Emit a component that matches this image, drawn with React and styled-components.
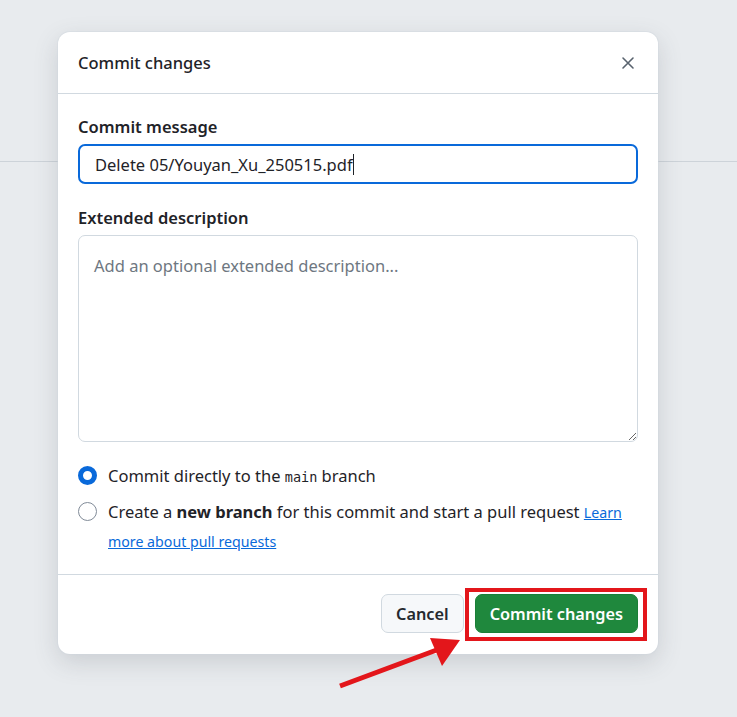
import styled, { createGlobalStyle } from "styled-components";

const Global = createGlobalStyle`
  html, body { margin: 0; padding: 0; }
  body {
    font-family: "Noto Sans", "Liberation Sans", sans-serif;
    color: #1f2328;
    background: #e9ecef;
  }
`;

const Page = styled.div`
  position: relative;
  width: 737px;
  height: 717px;
  overflow: hidden;
  background: #e8ebee;
`;

const Backdrop = styled.div`
  height: 161px;
  border-bottom: 1px solid #cdd3d9;
`;

const Dialog = styled.div`
  position: absolute;
  top: 32px;
  left: 58px;
  width: 600px;
  background: #fff;
  border-radius: 12px;
  box-shadow: 0 0 0 1px rgba(208, 215, 222, 0.4), 0 8px 24px rgba(66, 74, 83, 0.18);
  display: flex;
  flex-direction: column;
`;

const Header = styled.div`
  height: 61px;
  display: flex;
  align-items: center;
  justify-content: space-between;
  padding: 0 20px;
  border-bottom: 1px solid #d1d9e0;
`;

const Title = styled.h1`
  margin: 0;
  font-size: 16.5px;
  font-weight: 500;
  color: #1f2328;
`;

const Close = styled.button`
  border: 0;
  background: none;
  padding: 0;
  width: 20px;
  height: 20px;
  display: flex;
  align-items: center;
  justify-content: center;
  color: #59636e;
`;

const Body = styled.div`
  padding: 21px 20px 18px;
  display: flex;
  flex-direction: column;
`;

const Label = styled.div`
  font-size: 16.5px;
  font-weight: 600;
  margin-bottom: 6px;
`;

const InputBox = styled.div`
  height: 40px;
  box-sizing: border-box;
  border: 2px solid #0969da;
  border-radius: 7px;
  padding: 0 15px;
  display: flex;
  align-items: center;
  font-size: 16.5px;
  color: #1f2328;
  margin-bottom: 22px;
`;

const Caret = styled.span`
  display: inline-block;
  width: 1px;
  height: 21px;
  background: #1f2328;
`;

const TextArea = styled.textarea`
  display: block;
  box-sizing: border-box;
  width: 100%;
  height: 207px;
  border: 1px solid #d1d9e0;
  border-radius: 7px;
  padding: 18px 15px;
  font-family: inherit;
  font-size: 16.5px;
  resize: vertical;
  outline: none;
  margin: 0 0 20px;
  &::placeholder { color: #6e7781; }
`;

const Option = styled.label`
  display: flex;
  align-items: flex-start;
  gap: 11px;
  font-size: 16.5px;
  line-height: 28px;
  color: #1f2328;
  margin-bottom: 8px;
  &:last-child { margin-bottom: 0; }
`;

const Radio = styled.span`
  flex: none;
  box-sizing: border-box;
  width: 19px;
  height: 19px;
  margin-top: 4px;
  border-radius: 50%;
  background: #fff;
  border: ${(p) => (p.checked ? "5px solid #0969da" : "1px solid #818b98")};
`;

const Code = styled.code`
  font-family: "DejaVu Sans Mono", "Liberation Mono", monospace;
  font-size: 13.5px;
  line-height: 1;
`;

const Link = styled.a`
  color: #0969da;
  text-decoration: underline;
  font-size: 14.2px;
`;

const Footer = styled.div`
  border-top: 1px solid #d1d9e0;
  padding: 19px 20px 21px;
  display: flex;
  justify-content: flex-end;
  gap: 11px;
`;

const Button = styled.button`
  height: 39px;
  box-sizing: border-box;
  border-radius: 7px;
  padding: 0 14px;
  font-family: inherit;
  font-size: 16.3px;
  font-weight: 600;
  border: 1px solid ${(p) => (p.primary ? "#1a7f37" : "#d1d9e0")};
  background: ${(p) => (p.primary ? "#1f883d" : "#f6f8fa")};
  color: ${(p) => (p.primary ? "#fff" : "#25292e")};
`;

const Highlight = styled.div`
  position: relative;
  &::after {
    content: "";
    position: absolute;
    inset: -6px -9px -8px -10px;
    border: 4px solid #e3161b;
    pointer-events: none;
  }
`;

const Arrow = styled.svg`
  position: absolute;
  left: 330px;
  top: 630px;
`;

export default function App() {
  return (
    <Page>
      <Global />
      <Backdrop />
      <Dialog>
        <Header>
          <Title>Commit changes</Title>
          <Close aria-label="Close">
            <svg width="14" height="14" viewBox="0 0 14 14">
              <path d="M2 2l10 10M12 2L2 12" stroke="currentColor" strokeWidth="1.6" strokeLinecap="round" />
            </svg>
          </Close>
        </Header>
        <Body>
          <Label>Commit message</Label>
          <InputBox>
            Delete 05/Youyan_Xu_250515.pdf
            <Caret />
          </InputBox>
          <Label>Extended description</Label>
          <TextArea placeholder="Add an optional extended description..." />
          <Option>
            <Radio checked />
            <span>
              Commit directly to the <Code>main</Code> branch
            </span>
          </Option>
          <Option>
            <Radio />
            <span>
              Create a <b>new branch</b> for this commit and start a pull request{" "}
              <Link href="#">Learn more about pull requests</Link>
            </span>
          </Option>
        </Body>
        <Footer>
          <Button>Cancel</Button>
          <Highlight>
            <Button primary>Commit changes</Button>
          </Highlight>
        </Footer>
      </Dialog>
      <Arrow width="140" height="70" viewBox="0 0 140 70">
        <line x1="10" y1="56" x2="112" y2="18" stroke="#e3161b" strokeWidth="5" />
        <polygon points="130,10 100,8 112,36" fill="#e3161b" />
      </Arrow>
    </Page>
  );
}
